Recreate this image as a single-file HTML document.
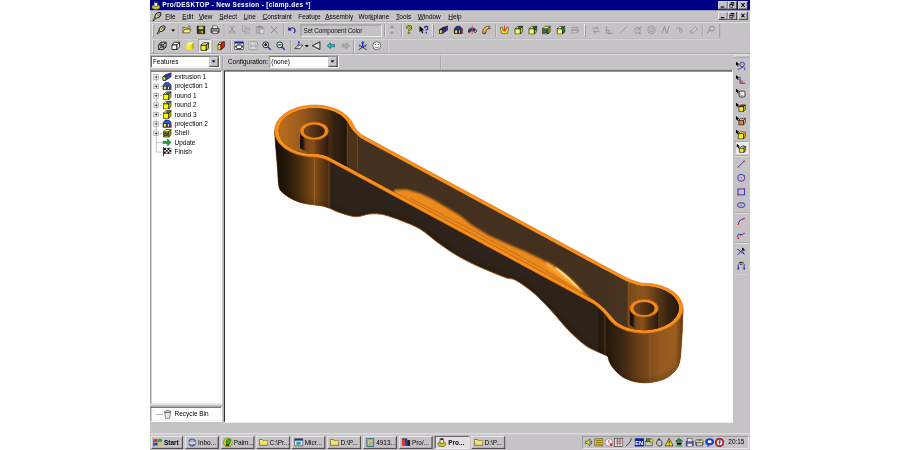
<!DOCTYPE html><html><head><meta charset="utf-8"><title>Pro/DESKTOP - New Session - [clamp.des *]</title><style>
html,body{margin:0;padding:0;background:#fff;}
body{width:900px;height:450px;overflow:hidden;position:relative;font-family:"Liberation Sans",sans-serif;}
#scr{position:absolute;left:150px;top:0;width:1024px;height:768px;transform:scale(0.5859375);transform-origin:0 0;background:#c6c3c6;font-size:11px;color:#000;overflow:hidden;}
#scr div,#scr span{position:absolute;box-sizing:border-box;white-space:nowrap;}
.tb{background:#000084;left:0;top:0;width:1024px;height:18px;}
.tt{color:#fff;font-weight:bold;left:21px;top:2px;letter-spacing:0.57px;}
.btn{background:#c6c3c6;border:1px solid;border-color:#fff #000 #000 #fff;box-shadow:inset -1px -1px 0 #848284;}
.mi{top:21px;height:14px;line-height:14px;}
.mi u{text-decoration:underline;}
.sepv{width:2px;border-left:1px solid #848284;border-right:1px solid #fff;}
.seph{height:2px;border-top:1px solid #848284;border-bottom:1px solid #fff;}
.grip{width:3px;border:1px solid;border-color:#fff #848284 #848284 #fff;}
.sunk{border:1px solid;border-color:#5c5c5c #fff #fff #5c5c5c;box-shadow:inset 1px 1px 0 #000, inset -1px -1px 0 #c6c3c6;background:#fff;}
.cbtn{background:#c6c3c6;border:1px solid;border-color:#c6c3c6 #000 #000 #c6c3c6;box-shadow:inset 1px 1px 0 #fff, inset -1px -1px 0 #848284;}
.ic{width:16px;height:16px;}
.task{top:744px;height:22px;line-height:20px;background:#c6c3c6;border:1px solid;border-color:#fff #000 #000 #fff;box-shadow:inset -1px -1px 0 #848284;}
.task span{left:22px;top:0;}
.task i{position:absolute;left:4px;top:2px;width:16px;height:16px;display:block;}
.tree{line-height:16px;height:16px;}
#model{position:absolute;left:0;top:0;}
</style></head><body>
<div id="scr">
<div class="tb"></div>
<svg style="position:absolute;left:2px;top:1px" width="16" height="16" viewBox="0 0 16 16"><ellipse cx="8" cy="11" rx="7" ry="4" fill="#d8c830" stroke="#404000"/><rect x="5" y="2" width="6" height="8" fill="#e8e8d0" stroke="#303030"/><rect x="6" y="1" width="4" height="3" fill="#202020"/></svg>
<span class="tt">Pro/DESKTOP - New Session - [clamp.des *]</span>
<div class="btn" style="left:970px;top:2px;width:16px;height:14px"></div>
<div style="left:974px;top:11px;width:6px;height:2px;background:#000"></div>
<div class="btn" style="left:986px;top:2px;width:16px;height:14px"></div>
<div style="left:991px;top:4px;width:6px;height:6px;border:1px solid #000;border-top-width:2px"></div>
<div style="left:989px;top:7px;width:6px;height:6px;border:1px solid #000;border-top-width:2px;background:#c6c3c6"></div>
<div class="btn" style="left:1004px;top:2px;width:16px;height:14px"></div>
<svg style="position:absolute;left:1008px;top:5px" width="8" height="7" viewBox="0 0 8 7"><path d="M0 0h2l2 2 2-2h2L5 3.5 8 7H6L4 5 2 7H0l3-3.5z" fill="#000"/></svg>
<div style="left:0;top:18px;width:1024px;height:1px;background:#e8e8e8"></div>
<svg style="position:absolute;left:4px;top:20px" width="16" height="16" viewBox="0 0 16 16"><ellipse cx="9.5" cy="6" rx="6" ry="3.6" transform="rotate(-42 9.5 6)" fill="#f0eca8" stroke="#1c1c10" stroke-width="1.8"/><ellipse cx="10.2" cy="5.4" rx="2.6" ry="1.3" transform="rotate(-42 10.2 5.4)" fill="#fff" stroke="#1c1c10" stroke-width="0.9"/><path d="M5 10.5L1.8 14.6" stroke="#1c1c10" stroke-width="3.2" stroke-linecap="round"/><path d="M5 10.5L2.2 14" stroke="#e8e4a0" stroke-width="1.2" stroke-linecap="round"/></svg>
<span class="mi" style="left:26px"><u>F</u>ile</span>
<span class="mi" style="left:55px"><u>E</u>dit</span>
<span class="mi" style="left:83px"><u>V</u>iew</span>
<span class="mi" style="left:118px"><u>S</u>elect</span>
<span class="mi" style="left:160px"><u>L</u>ine</span>
<span class="mi" style="left:192px"><u>C</u>onstraint</span>
<span class="mi" style="left:253px">Featu<u>r</u>e</span>
<span class="mi" style="left:299px"><u>A</u>ssembly</span>
<span class="mi" style="left:356px">Wor<u>k</u>plane</span>
<span class="mi" style="left:420px"><u>T</u>ools</span>
<span class="mi" style="left:457px"><u>W</u>indow</span>
<span class="mi" style="left:509px"><u>H</u>elp</span>
<div class="btn" style="left:970px;top:20px;width:16px;height:14px"></div>
<div style="left:974px;top:29px;width:6px;height:2px;background:#000"></div>
<div class="btn" style="left:986px;top:20px;width:16px;height:14px"></div>
<div style="left:991px;top:22px;width:6px;height:6px;border:1px solid #000;border-top-width:2px"></div>
<div style="left:989px;top:25px;width:6px;height:6px;border:1px solid #000;border-top-width:2px;background:#c6c3c6"></div>
<div class="btn" style="left:1004px;top:20px;width:16px;height:14px"></div>
<svg style="position:absolute;left:1008px;top:23px" width="8" height="7" viewBox="0 0 8 7"><path d="M0 0h2l2 2 2-2h2L5 3.5 8 7H6L4 5 2 7H0l3-3.5z" fill="#000"/></svg>
<div class="seph" style="left:0;top:37px;width:1024px"></div>
<div class="seph" style="left:0;top:65px;width:974px"></div>
<div class="seph" style="left:0;top:91px;width:1024px"></div>
<div class="grip" style="left:4px;top:41px;height:22px"></div>
<svg style="position:absolute;left:11px;top:43px" width="16" height="16" viewBox="0 0 16 16"><ellipse cx="9.5" cy="6" rx="6" ry="3.6" transform="rotate(-42 9.5 6)" fill="#f0eca8" stroke="#1c1c10" stroke-width="1.8"/><ellipse cx="10.2" cy="5.4" rx="2.6" ry="1.3" transform="rotate(-42 10.2 5.4)" fill="#fff" stroke="#1c1c10" stroke-width="0.9"/><path d="M5 10.5L1.8 14.6" stroke="#1c1c10" stroke-width="3.2" stroke-linecap="round"/><path d="M5 10.5L2.2 14" stroke="#e8e4a0" stroke-width="1.2" stroke-linecap="round"/></svg>
<svg style="position:absolute;left:36px;top:50px" width="7" height="4" viewBox="0 0 7 4"><path d="M0 0h7L3.5 4z" fill="#000"/></svg>
<div class="sepv" style="left:49px;top:41px;height:22px"></div>
<svg style="position:absolute;left:55px;top:43px" width="16" height="16" viewBox="0 0 16 16"><path d="M1 13V4h4l1 1h6v2" fill="#e8d860" stroke="#282800"/><path d="M1 13l3-6h11l-3 6z" fill="#f8f080" stroke="#282800"/><path d="M10 1q3 0 4 3" stroke="#000" fill="none"/></svg>
<svg style="position:absolute;left:79px;top:43px" width="16" height="16" viewBox="0 0 16 16"><path d="M1.5 1.5h13v13h-12l-1-1z" fill="#202010" stroke="#000"/><rect x="4" y="2" width="8" height="5" fill="#d8d060"/><rect x="4" y="9" width="8" height="5" fill="#606020"/><rect x="9" y="10" width="2" height="3" fill="#e8e8c0"/></svg>
<svg style="position:absolute;left:103px;top:43px" width="16" height="16" viewBox="0 0 16 16"><path d="M4 6V1h7l1 1v4" fill="#fff" stroke="#101010"/><path d="M1 6h14v6H1z" fill="#a4a4a4" stroke="#000" stroke-width="1.300"/><path d="M3 10h10v4H3z" fill="#e8e8e8" stroke="#000"/><rect x="11" y="7.5" width="2" height="1" fill="#e0e000"/></svg>
<div class="sepv" style="left:126px;top:41px;height:22px"></div>
<svg style="position:absolute;left:132px;top:43px" width="16" height="16" viewBox="0 0 16 16"><path d="M5 1l5 9M11 1L6 10" stroke="#848284" fill="none" stroke-width="1.2"/><circle cx="4.5" cy="12" r="2.2" fill="none" stroke="#848284"/><circle cx="11.5" cy="12" r="2.2" fill="none" stroke="#848284"/></svg>
<svg style="position:absolute;left:156px;top:43px" width="16" height="16" viewBox="0 0 16 16"><path d="M1.5 1.5h7v9h-7z" fill="none" stroke="#848284"/><path d="M6.5 5.5h7v9h-7z" fill="#d4d0d4" stroke="#848284"/><path d="M8 8h4M8 10h4M8 12h4" stroke="#848284" stroke-width="0.8"/></svg>
<svg style="position:absolute;left:180px;top:43px" width="16" height="16" viewBox="0 0 16 16"><path d="M1.5 2.5h11v11h-11z" fill="#b8b4b8" stroke="#848284"/><rect x="4" y="1" width="6" height="3" fill="#848284"/><path d="M7.5 6.5h7v8h-7z" fill="#dcdcdc" stroke="#848284"/></svg>
<svg style="position:absolute;left:204px;top:43px" width="16" height="16" viewBox="0 0 16 16"><path d="M2.5 2.5l11 11M13.5 2.5l-11 11" stroke="#848284" stroke-width="1.6"/></svg>
<div class="sepv" style="left:228px;top:41px;height:22px"></div>
<svg style="position:absolute;left:235px;top:43px" width="16" height="16" viewBox="0 0 16 16"><path d="M3 7q5-5 9 0q2 4-2 6" fill="none" stroke="#101090" stroke-width="1.8"/><path d="M1 3v6h6z" fill="#101090"/></svg>
<div style="left:257px;top:42px;width:139px;height:21px;background:#c6c3c6;border:1px solid;border-color:#848284 #fff #fff #848284;box-shadow:inset 1px 1px 0 #a8a6a8"></div>
<span style="left:262px;top:46px;color:#181818;letter-spacing:-0.3px">Set Component Color</span>
<div class="sepv" style="left:400px;top:41px;height:22px"></div>
<svg style="position:absolute;left:405px;top:43px" width="16" height="16" viewBox="0 0 16 16"><path d="M8 1v14M8 1l-3 4M8 1l3 4M8 15l-3-4M8 15l3-4" stroke="#848284" fill="none" stroke-width="1.2"/><path d="M5 8h6" stroke="#fff"/></svg>
<div class="sepv" style="left:429px;top:41px;height:22px"></div>
<svg style="position:absolute;left:434px;top:43px" width="16" height="16" viewBox="0 0 16 16"><path d="M4.5 5q0-3.5 3.5-3.5t3.5 3q0 2-2 3t-1.5 2.5" fill="none" stroke="#000" stroke-width="3.4"/><path d="M4.5 5q0-3.5 3.5-3.5t3.5 3q0 2-2 3t-1.5 2.5" fill="none" stroke="#e8e000" stroke-width="1.8"/><circle cx="8" cy="13.3" r="1.7" fill="#e8e000" stroke="#000" stroke-width="0.8"/></svg>
<svg style="position:absolute;left:459px;top:43px" width="16" height="16" viewBox="0 0 16 16"><path d="M1 1v11l2.5-2.5 2 4.5 2-1-2-4.3H9z" fill="#000"/><path d="M9.500 5q0-3 3-3t3 2.600q0 1.800-1.700 2.600t-1.300 2.300" fill="none" stroke="#1010a0" stroke-width="2"/><circle cx="12.500" cy="12.800" r="1.3" fill="#1010a0"/></svg>
<div class="grip" style="left:481px;top:41px;height:22px"></div>
<svg style="position:absolute;left:493px;top:43px" width="16" height="16" viewBox="0 0 16 16"><path d="M1 8l5-4 9-2v6l-9 6-5 0z" fill="#1838b0" stroke="#000"/><path d="M1 8h5v6H1z" fill="#f0e020" stroke="#000"/><path d="M6 8l9-6" stroke="#000" fill="none"/><path d="M14 0v9" stroke="#f02020" stroke-width="1.4"/></svg>
<svg style="position:absolute;left:518px;top:43px" width="16" height="16" viewBox="0 0 16 16"><path d="M1 7l4-5h6l4 4v8H1z" fill="#1838b0" stroke="#000"/><path d="M2 8h5v6H2z" fill="#f0e020" stroke="#000"/><path d="M9 8h3v6H9z" fill="#f0e020" stroke="#000"/><path d="M14.500 6v9" stroke="#f02020" stroke-width="1.6"/></svg>
<svg style="position:absolute;left:542px;top:43px" width="16" height="16" viewBox="0 0 16 16"><path d="M1 11q0-6 7-6t7 6q-2 3-4 0q0-2-3-2t-3 2q-2 3-4 0z" fill="#2040b8" stroke="#000"/><path d="M11 11q2 3 4 0q0-3-2-3.500z" fill="#f0e020" stroke="#000" stroke-width="0.8"/><path d="M8 0v16" stroke="#f03030" stroke-width="1.3"/></svg>
<svg style="position:absolute;left:566px;top:43px" width="16" height="16" viewBox="0 0 16 16"><path d="M2 14q-1-10 8-12h4v4h-3q-4 1-4 8z" fill="#f0a040" stroke="#000"/><path d="M2 14q1 2 5 0" fill="#2040b8" stroke="#1030a0"/><path d="M4 10q1-6 8-7" stroke="#f8e8a0" fill="none" stroke-width="1.5"/><ellipse cx="13" cy="4" rx="1.300" ry="2" fill="#f0d860" stroke="#000" stroke-width="0.7"/></svg>
<div class="sepv" style="left:589px;top:41px;height:22px"></div>
<svg style="position:absolute;left:597px;top:43px" width="16" height="16" viewBox="0 0 16 16"><path d="M1 4l3-1 2 7h4l2-7 3 1-2 10H3z" fill="#f8f020" stroke="#404000"/><path d="M8 0v9" stroke="#f02020" stroke-width="1.4"/><path d="M6 6l2 4 2-4z" fill="#f02020"/></svg>
<svg style="position:absolute;left:621px;top:43px" width="16" height="16" viewBox="0 0 16 16"><path d="M2 6h9v9H2z" fill="#ffff50" stroke="#000" stroke-width="1"/><path d="M2 6l4-4h9l-4 4z" fill="#ffffa0" stroke="#000" stroke-width="1"/><path d="M11 6l4-4v9l-4 4z" fill="#c8c820" stroke="#000" stroke-width="1"/><path d="M7 5q0-3 4-3l4 0-4 4z" fill="#108888" stroke="#000" stroke-width="0.8"/></svg>
<svg style="position:absolute;left:645px;top:43px" width="16" height="16" viewBox="0 0 16 16"><path d="M2 6h9v9H2z" fill="#ffff50" stroke="#000" stroke-width="1"/><path d="M2 6l4-4h9l-4 4z" fill="#ffffa0" stroke="#000" stroke-width="1"/><path d="M11 6l4-4v9l-4 4z" fill="#c8c820" stroke="#000" stroke-width="1"/><path d="M8 4l3-2h4l-4 4z" fill="#108888" stroke="#000" stroke-width="0.8"/><path d="M11 6l4-4v4l-4 4z" fill="#108888" stroke="#000" stroke-width="0.8"/></svg>
<svg style="position:absolute;left:668px;top:43px" width="16" height="16" viewBox="0 0 16 16"><path d="M2 6h9v9H2z" fill="#d8d020" stroke="#000" stroke-width="1"/><path d="M2 6l4-4h9l-4 4z" fill="#ffff60" stroke="#000" stroke-width="1"/><path d="M11 6l4-4v9l-4 4z" fill="#a0a000" stroke="#000" stroke-width="1"/><rect x="4" y="8" width="5" height="5" fill="#108080" stroke="#000" stroke-width="0.8"/></svg>
<svg style="position:absolute;left:693px;top:43px" width="16" height="16" viewBox="0 0 16 16"><path d="M2 6h9v9H2z" fill="#ffff50" stroke="#000" stroke-width="1"/><path d="M2 6l4-4h9l-4 4z" fill="#ffffa0" stroke="#000" stroke-width="1"/><path d="M11 6l4-4v9l-4 4z" fill="#c8c820" stroke="#000" stroke-width="1"/><path d="M9 3h3l3.500 8-4 2z" fill="#108888" stroke="#000" stroke-width="0.8"/></svg>
<svg style="position:absolute;left:717px;top:43px" width="16" height="16" viewBox="0 0 16 16"><path d="M3 4h9v3H3zM3 9h9v4H3z" fill="#d4d0d4" stroke="#848284"/><path d="M12 4l2-2M12 9l2-2v4l-2 2" stroke="#848284" fill="none"/></svg>
<div class="grip" style="left:741px;top:41px;height:22px"></div>
<svg style="position:absolute;left:753px;top:43px" width="16" height="16" viewBox="0 0 16 16"><path d="M2 5h9M9 3l3 2-3 2M14 11H5M7 9l-3 2 3 2" stroke="#848284" fill="none" stroke-width="1.2"/></svg>
<svg style="position:absolute;left:776px;top:43px" width="16" height="16" viewBox="0 0 16 16"><path d="M3 2v12h11M3 9h5v5" stroke="#848284" fill="none" stroke-width="1.3"/></svg>
<svg style="position:absolute;left:800px;top:43px" width="16" height="16" viewBox="0 0 16 16"><path d="M2 14L14 2" stroke="#848284" stroke-width="1.3"/></svg>
<svg style="position:absolute;left:825px;top:43px" width="16" height="16" viewBox="0 0 16 16"><circle cx="7" cy="9" r="5" fill="none" stroke="#848284" stroke-width="1.2"/><path d="M7 9l7-7M10 14l4 1" stroke="#848284" stroke-width="1.2"/></svg>
<svg style="position:absolute;left:848px;top:43px" width="16" height="16" viewBox="0 0 16 16"><circle cx="8" cy="8" r="6.500" fill="none" stroke="#848284" stroke-width="1.100"/><circle cx="8" cy="8" r="3.200" fill="none" stroke="#848284" stroke-width="1.100"/></svg>
<svg style="position:absolute;left:872px;top:43px" width="16" height="16" viewBox="0 0 16 16"><path d="M2 14L6 2M6 2l4 12M10 14l4-12" stroke="#848284" stroke-width="1.300" fill="none"/></svg>
<svg style="position:absolute;left:896px;top:43px" width="16" height="16" viewBox="0 0 16 16"><path d="M2 7q5-6 9 0M11 7q2 4-2 7M8 6v5" stroke="#848284" stroke-width="1.200" fill="none"/></svg>
<svg style="position:absolute;left:920px;top:43px" width="16" height="16" viewBox="0 0 16 16"><path d="M2 12l3 2 9-8-3-3z" fill="#dcdcdc" stroke="#848284" stroke-width="1.300"/><path d="M2 9l4 4" stroke="#848284"/></svg>
<div class="sepv" style="left:942px;top:41px;height:22px"></div>
<svg style="position:absolute;left:949px;top:43px" width="16" height="16" viewBox="0 0 16 16"><circle cx="10" cy="6" r="4.200" fill="none" stroke="#848284" stroke-width="1.300"/><path d="M7 9l-5 5" stroke="#848284" stroke-width="1.800"/><path d="M8 10l-5 5" stroke="#fff" stroke-width="0.800"/></svg>
<div style="left:972px;top:40px;width:1px;height:25px;background:#848284"></div>
<div class="grip" style="left:4px;top:68px;height:22px"></div>
<svg style="position:absolute;left:13px;top:70px" width="16" height="16" viewBox="0 0 16 16"><path d="M1.500 6.500h8v8h-8z" fill="#f4f4f4" stroke="#000" stroke-width="1.300"/><path d="M1.500 6.500l4.500-4.500h8.500v8l-4.500 4.500M9.500 6.500l5-4.500" fill="none" stroke="#000" stroke-width="1.300"/><path d="M6 2v8h8.500M6 10l-4.500 4.500" fill="none" stroke="#000" stroke-width="1"/><circle cx="6" cy="10" r="2.200" fill="none" stroke="#000" stroke-width="0.900"/></svg>
<svg style="position:absolute;left:36px;top:70px" width="16" height="16" viewBox="0 0 16 16"><path d="M1.500 6.500h8.500v8h-8.500z" fill="#fff" stroke="#000" stroke-width="1.300"/><path d="M1.500 6.500l4.500-4.500h8.500l-4.500 4.500z" fill="#fff" stroke="#000" stroke-width="1.300"/><path d="M10 6.500l4.500-4.500v8l-4.500 4.500z" fill="#fff" stroke="#000" stroke-width="1.300"/></svg>
<svg style="position:absolute;left:60px;top:70px" width="16" height="16" viewBox="0 0 16 16"><path d="M2 6h9v9H2z" fill="#f8f020" stroke="none" stroke-width="0"/><path d="M2 6l4-4h9l-4 4z" fill="#ffff90" stroke="none" stroke-width="0"/><path d="M11 6l4-4v9l-4 4z" fill="#b8b800" stroke="none" stroke-width="0"/></svg>
<div style="left:82px;top:67px;width:22px;height:22px;background:#e4e2e4;border:1px solid;border-color:#848284 #fff #fff #848284"></div>
<svg style="position:absolute;left:85px;top:71px" width="16" height="16" viewBox="0 0 16 16"><path d="M2 6h9v9H2z" fill="#f8f020" stroke="#000" stroke-width="1.2"/><path d="M2 6l4-4h9l-4 4z" fill="#ffff80" stroke="#000" stroke-width="1.2"/><path d="M11 6l4-4v9l-4 4z" fill="#c8c800" stroke="#000" stroke-width="1.2"/></svg>
<div class="sepv" style="left:107px;top:68px;height:22px"></div>
<svg style="position:absolute;left:113px;top:70px" width="16" height="16" viewBox="0 0 16 16"><path d="M3 6h5v9H3z" fill="#f8f020" stroke="#000"/><path d="M3 6l3-4h4l-2 4z" fill="#ffff80" stroke="#000"/><path d="M8 6l2-4 4-1v9l-6 5z" fill="#e01818" stroke="#000"/></svg>
<div class="sepv" style="left:137px;top:68px;height:22px"></div>
<svg style="position:absolute;left:144px;top:70px" width="16" height="16" viewBox="0 0 16 16"><rect x="0.500" y="1.500" width="15" height="13" fill="#fff" stroke="#000"/><rect x="0.500" y="1.500" width="15" height="3" fill="#1030a0"/><path d="M3 7l-2 2.500 2 2.500zM13 7l2 2.500-2 2.500zM5 6h6v1H5zM5 13h6v1H5z" fill="#000"/><rect x="4" y="7" width="8" height="6" fill="none" stroke="#000"/></svg>
<svg style="position:absolute;left:168px;top:70px" width="16" height="16" viewBox="0 0 16 16"><rect x="0.500" y="1.500" width="15" height="13" fill="#d8d8d8" stroke="#848284"/><path d="M3 5l4 3-4 3zM13 5l-4 3 4 3z" fill="none" stroke="#848284"/></svg>
<svg style="position:absolute;left:191px;top:70px" width="16" height="16" viewBox="0 0 16 16"><circle cx="6.500" cy="6.500" r="5" fill="#e8f8f8" stroke="#000" stroke-width="1.400"/><path d="M10 10l5 5" stroke="#1020a0" stroke-width="2.200"/><path d="M4 6.500h5" stroke="#000" stroke-width="1.300"/><path d="M6.500 4v5" stroke="#000" stroke-width="1.300"/><circle cx="6.500" cy="6.500" r="2.200" fill="#000"/></svg>
<svg style="position:absolute;left:215px;top:70px" width="16" height="16" viewBox="0 0 16 16"><circle cx="6.500" cy="6.500" r="5" fill="#e8f8f8" stroke="#000" stroke-width="1.400"/><path d="M10 10l5 5" stroke="#1020a0" stroke-width="2.200"/><path d="M4 6.500h5" stroke="#000" stroke-width="1.300"/><path d="M3.500 6.500h6" stroke="#108080" stroke-width="1.600"/></svg>
<div class="sepv" style="left:239px;top:68px;height:22px"></div>
<svg style="position:absolute;left:246px;top:70px" width="16" height="16" viewBox="0 0 16 16"><path d="M1 13l5-6h9l-5 6z" fill="#e8e8e8" stroke="#000"/><path d="M8 1v8" stroke="#2030c0" stroke-width="1.300"/><circle cx="8" cy="2" r="1.500" fill="#2030c0"/><path d="M3 14l4-5" stroke="#000" stroke-width="0.600"/></svg>
<svg style="position:absolute;left:264px;top:77px" width="7" height="4" viewBox="0 0 7 4"><path d="M0 0h7L3.5 4z" fill="#000"/></svg>
<svg style="position:absolute;left:276px;top:70px" width="16" height="16" viewBox="0 0 16 16"><path d="M1 8L14 1.500v13z" fill="#e0e0e0" stroke="#000" stroke-width="1.400"/></svg>
<svg style="position:absolute;left:301px;top:70px" width="16" height="16" viewBox="0 0 16 16"><path d="M1 8l6-5v3h7v4H7v3z" fill="#18c8c8" stroke="#204060" stroke-width="1"/></svg>
<svg style="position:absolute;left:326px;top:70px" width="16" height="16" viewBox="0 0 16 16"><path d="M15 8l-6-5v3H2v4h7v3z" fill="#b0b0b0" stroke="#848284" stroke-width="1"/></svg>
<div class="sepv" style="left:347px;top:68px;height:22px"></div>
<svg style="position:absolute;left:355px;top:70px" width="16" height="16" viewBox="0 0 16 16"><path d="M1 6l14 9M15 6L1 15" stroke="#202020" stroke-width="1.400"/><path d="M8 0l-3 4h1.800v6h2.400V4H11z" fill="#1030e0"/><circle cx="8" cy="10.500" r="1.800" fill="#1030e0"/><path d="M2 9l2 1M14 9l-2 1" stroke="#1030d0" stroke-width="1.300"/></svg>
<svg style="position:absolute;left:379px;top:70px" width="16" height="16" viewBox="0 0 16 16"><circle cx="8" cy="8" r="6.800" fill="#fff" stroke="#202020" stroke-width="1.100"/><circle cx="5.500" cy="6" r="0.900"/><circle cx="10.500" cy="6" r="0.900"/><path d="M4.500 10q3.500 3 7 0" fill="none" stroke="#000" stroke-width="0.900"/></svg>
<div style="left:406px;top:67px;width:1px;height:24px;background:#848284"></div><div style="left:407px;top:67px;width:1px;height:24px;background:#fff"></div>
<div class="sunk" style="left:1px;top:95px;width:118px;height:21px"></div>
<span style="left:5px;top:100px">Features</span>
<div class="cbtn" style="left:101px;top:97px;width:16px;height:17px"></div>
<svg style="position:absolute;left:105px;top:103px" width="7" height="4"><path d="M0 0h7L3.5 4z" fill="#000"/></svg>
<div class="sepv" style="left:123px;top:94px;height:26px"></div>
<span style="left:133px;top:100px">Configuration:</span>
<div class="sunk" style="left:203px;top:95px;width:119px;height:21px"></div>
<span style="left:207px;top:100px">(none)</span>
<div class="cbtn" style="left:304px;top:97px;width:16px;height:17px"></div>
<svg style="position:absolute;left:308px;top:103px" width="7" height="4"><path d="M0 0h7L3.5 4z" fill="#000"/></svg>
<div class="sepv" style="left:495px;top:94px;height:26px"></div>
<div class="sunk" style="left:0;top:120px;width:123px;height:570px"></div>
<div style="left:10px;top:131px;width:1px;height:96px;background:repeating-linear-gradient(#848284 0 1px,transparent 1px 2px)"></div>
<div style="left:10px;top:227px;width:1px;height:32px;background:#9c9c9c"></div>
<div style="left:11px;top:131px;width:9px;height:1px;background:repeating-linear-gradient(90deg,#848284 0 1px,transparent 1px 2px)"></div>
<div style="left:6px;top:127px;width:9px;height:9px;background:#fff;border:1px solid #848284"></div>
<div style="left:8px;top:131px;width:5px;height:1px;background:#000"></div><div style="left:10px;top:129px;width:1px;height:5px;background:#000"></div>
<svg style="position:absolute;left:21px;top:123px" width="16" height="16" viewBox="0 0 16 16"><path d="M1 8l5-4 9-2v6l-9 6-5 0z" fill="#2c50c8" stroke="#000"/><path d="M1 8h5v6H1z" fill="#f0e020" stroke="#000"/><path d="M6 8l9-6" stroke="#000" fill="none"/><path d="M15 0v7" stroke="#f02020" stroke-width="1.400"/></svg>
<span class="tree" style="left:42px;top:123px">extrusion 1</span>
<div style="left:11px;top:147px;width:9px;height:1px;background:repeating-linear-gradient(90deg,#848284 0 1px,transparent 1px 2px)"></div>
<div style="left:6px;top:143px;width:9px;height:9px;background:#fff;border:1px solid #848284"></div>
<div style="left:8px;top:147px;width:5px;height:1px;background:#000"></div><div style="left:10px;top:145px;width:1px;height:5px;background:#000"></div>
<svg style="position:absolute;left:21px;top:139px" width="16" height="16" viewBox="0 0 16 16"><path d="M1 7l4-5h6l4 4v8H1z" fill="#3458d0" stroke="#000"/><path d="M2 8h5v6H2z" fill="#f4ec60" stroke="#000"/><path d="M9 8h3v6H9z" fill="#f8f8f0" stroke="#000"/><path d="M15 7v9" stroke="#f02020" stroke-width="1.600"/></svg>
<span class="tree" style="left:42px;top:139px">projection 1</span>
<div style="left:11px;top:163px;width:9px;height:1px;background:repeating-linear-gradient(90deg,#848284 0 1px,transparent 1px 2px)"></div>
<div style="left:6px;top:159px;width:9px;height:9px;background:#fff;border:1px solid #848284"></div>
<div style="left:8px;top:163px;width:5px;height:1px;background:#000"></div><div style="left:10px;top:161px;width:1px;height:5px;background:#000"></div>
<svg style="position:absolute;left:21px;top:155px" width="16" height="16" viewBox="0 0 16 16"><path d="M2 6h9v9H2z" fill="#ffff00" stroke="#000" stroke-width="1"/><path d="M2 6l4-4h9l-4 4z" fill="#ffff80" stroke="#000" stroke-width="1"/><path d="M11 6l4-4v9l-4 4z" fill="#c0c000" stroke="#000" stroke-width="1"/><path d="M7 5q0-3 4-3l4 0-4 4z" fill="#3090d0" stroke="#000" stroke-width="0.800"/></svg>
<span class="tree" style="left:42px;top:155px">round 1</span>
<div style="left:11px;top:179px;width:9px;height:1px;background:repeating-linear-gradient(90deg,#848284 0 1px,transparent 1px 2px)"></div>
<div style="left:6px;top:175px;width:9px;height:9px;background:#fff;border:1px solid #848284"></div>
<div style="left:8px;top:179px;width:5px;height:1px;background:#000"></div><div style="left:10px;top:177px;width:1px;height:5px;background:#000"></div>
<svg style="position:absolute;left:21px;top:171px" width="16" height="16" viewBox="0 0 16 16"><path d="M2 6h9v9H2z" fill="#ffff00" stroke="#000" stroke-width="1"/><path d="M2 6l4-4h9l-4 4z" fill="#ffff80" stroke="#000" stroke-width="1"/><path d="M11 6l4-4v9l-4 4z" fill="#c0c000" stroke="#000" stroke-width="1"/><path d="M7 5q0-3 4-3l4 0-4 4z" fill="#3090d0" stroke="#000" stroke-width="0.800"/></svg>
<span class="tree" style="left:42px;top:171px">round 2</span>
<div style="left:11px;top:195px;width:9px;height:1px;background:repeating-linear-gradient(90deg,#848284 0 1px,transparent 1px 2px)"></div>
<div style="left:6px;top:191px;width:9px;height:9px;background:#fff;border:1px solid #848284"></div>
<div style="left:8px;top:195px;width:5px;height:1px;background:#000"></div><div style="left:10px;top:193px;width:1px;height:5px;background:#000"></div>
<svg style="position:absolute;left:21px;top:187px" width="16" height="16" viewBox="0 0 16 16"><path d="M2 6h9v9H2z" fill="#ffff00" stroke="#000" stroke-width="1"/><path d="M2 6l4-4h9l-4 4z" fill="#ffff80" stroke="#000" stroke-width="1"/><path d="M11 6l4-4v9l-4 4z" fill="#c0c000" stroke="#000" stroke-width="1"/><path d="M7 5q0-3 4-3l4 0-4 4z" fill="#3090d0" stroke="#000" stroke-width="0.800"/></svg>
<span class="tree" style="left:42px;top:187px">round 3</span>
<div style="left:11px;top:211px;width:9px;height:1px;background:repeating-linear-gradient(90deg,#848284 0 1px,transparent 1px 2px)"></div>
<div style="left:6px;top:207px;width:9px;height:9px;background:#fff;border:1px solid #848284"></div>
<div style="left:8px;top:211px;width:5px;height:1px;background:#000"></div><div style="left:10px;top:209px;width:1px;height:5px;background:#000"></div>
<svg style="position:absolute;left:21px;top:203px" width="16" height="16" viewBox="0 0 16 16"><path d="M1 7l4-5h6l4 4v8H1z" fill="#3458d0" stroke="#000"/><path d="M2 8h5v6H2z" fill="#f4ec60" stroke="#000"/><path d="M9 8h3v6H9z" fill="#f8f8f0" stroke="#000"/><path d="M15 7v9" stroke="#f02020" stroke-width="1.600"/></svg>
<span class="tree" style="left:42px;top:203px">projection 2</span>
<div style="left:11px;top:227px;width:9px;height:1px;background:repeating-linear-gradient(90deg,#848284 0 1px,transparent 1px 2px)"></div>
<div style="left:6px;top:223px;width:9px;height:9px;background:#fff;border:1px solid #848284"></div>
<div style="left:8px;top:227px;width:5px;height:1px;background:#000"></div><div style="left:10px;top:225px;width:1px;height:5px;background:#000"></div>
<svg style="position:absolute;left:21px;top:219px" width="16" height="16" viewBox="0 0 16 16"><path d="M2 6h9v9H2z" fill="#d8d020" stroke="#000" stroke-width="1"/><path d="M2 6l4-4h9l-4 4z" fill="#ffff60" stroke="#000" stroke-width="1"/><path d="M11 6l4-4v9l-4 4z" fill="#a0a000" stroke="#000" stroke-width="1"/><rect x="4" y="8" width="5" height="5" fill="#108080" stroke="#000" stroke-width="0.800"/></svg>
<span class="tree" style="left:42px;top:219px">Shell</span>
<div style="left:10px;top:243px;width:11px;height:1px;background:#9c9c9c"></div>
<svg style="position:absolute;left:21px;top:235px" width="16" height="16" viewBox="0 0 16 16"><path d="M1 6h8V2l6 6-6 6v-4H1z" fill="#20a040" stroke="#106020" stroke-width="0.800"/></svg>
<span class="tree" style="left:42px;top:235px">Update</span>
<div style="left:10px;top:259px;width:11px;height:1px;background:#9c9c9c"></div>
<svg style="position:absolute;left:21px;top:251px" width="16" height="16" viewBox="0 0 16 16"><path d="M2 0v16" stroke="#802020" stroke-width="1.800"/><path d="M3 2h12v9H3z" fill="#fff" stroke="#000" stroke-width="0.800"/><path d="M3 2h3v3H3zM9 2h3v3H9zM6 5h3v3H6zM12 5h3v3h-3zM3 8h3v3H3zM9 8h3v3H9z" fill="#000"/></svg>
<span class="tree" style="left:42px;top:251px">Finish</span>
<div class="sunk" style="left:0;top:694px;width:123px;height:26px"></div>
<div style="left:10px;top:707px;width:12px;height:1px;background:#848284"></div>
<svg style="position:absolute;left:22px;top:699px" width="16" height="16" viewBox="0 0 16 16"><path d="M3 5h10l-1.5 10h-7z" fill="#e8e8e8" stroke="#404040"/><path d="M2 4l5-3 7 2-1 2H3z" fill="#d0d0d0" stroke="#404040"/></svg>
<span style="left:42px;top:700px">Recycle Bin</span>
<div style="left:125px;top:119px;width:870px;height:602px;background:#fff;border:1px solid;border-color:#848284 #fff #fff #848284;box-shadow:inset 2px 2px 0 #303030"></div>
<div class="grip" style="left:997px;top:95px;width:24px;height:3px"></div>
<svg style="position:absolute;left:1000px;top:105px" width="17" height="17" viewBox="0 0 17 17"><path d="M0 0v7l1.800-1.600 1.500 3.200 1.400-.7-1.500-3H6z" fill="#000"/><circle cx="10.500" cy="5" r="4" fill="none" stroke="#2828b0" stroke-width="1.400"/><circle cx="10.500" cy="5" r="0.800" fill="#e02020"/><path d="M3 14l10-5M15 10v5" stroke="#2828b0" stroke-width="1.400"/></svg>
<svg style="position:absolute;left:1000px;top:128px" width="17" height="17" viewBox="0 0 17 17"><path d="M0 0v7l1.800-1.600 1.500 3.200 1.400-.7-1.500-3H6z" fill="#000"/><path d="M7 3v11h9" fill="none" stroke="#2828b0" stroke-width="1.500"/><path d="M7 10h4v4" fill="none" stroke="#e02020" stroke-width="1.200"/></svg>
<svg style="position:absolute;left:1000px;top:151px" width="17" height="17" viewBox="0 0 17 17"><path d="M0 0v7l1.800-1.600 1.500 3.200 1.400-.7-1.500-3H6z" fill="#000"/><rect x="5.500" y="4.500" width="10" height="10" rx="2" fill="#f0f0f0" stroke="#000" stroke-width="1.300"/><path d="M8 7v5h5" stroke="#808080" fill="none"/></svg>
<svg style="position:absolute;left:1000px;top:175px" width="17" height="17" viewBox="0 0 17 17"><path d="M0 0v7l1.800-1.600 1.500 3.200 1.400-.7-1.500-3H6z" fill="#000"/><path d="M5 7h8v8H5z" fill="#f8f020" stroke="#000"/><path d="M5 7l3-3h8l-3 3z" fill="#e82020" stroke="#000"/><path d="M13 7l3-3v8l-3 3z" fill="#c8c800" stroke="#000"/></svg>
<svg style="position:absolute;left:1000px;top:198px" width="17" height="17" viewBox="0 0 17 17"><path d="M0 0v7l1.800-1.600 1.500 3.200 1.400-.7-1.500-3H6z" fill="#000"/><path d="M5 7h8v8H5z" fill="#f08020" stroke="#000"/><path d="M5 7l3-3h8l-3 3z" fill="#e8e8e8" stroke="#000"/><path d="M13 7l3-3v8l-3 3z" fill="#c8c8c8" stroke="#000"/></svg>
<svg style="position:absolute;left:1000px;top:221px" width="17" height="17" viewBox="0 0 17 17"><path d="M0 0v7l1.800-1.600 1.500 3.200 1.400-.7-1.500-3H6z" fill="#000"/><path d="M4 7h9v9H4z" fill="#f8f020" stroke="#000"/><path d="M4 7l3-3h8l-2 3z" fill="#ffff80" stroke="#000"/><path d="M13 7l3-3v8l-3 4z" fill="#c8c800" stroke="#000"/><circle cx="13.500" cy="5.500" r="2.300" fill="#f08020"/></svg>
<div style="left:998px;top:241px;width:23px;height:22px;background:#eceaec;border:1px solid;border-color:#848284 #fff #fff #848284"></div>
<svg style="position:absolute;left:1001px;top:245px" width="17" height="17" viewBox="0 0 17 17"><path d="M0 0v7l1.800-1.600 1.500 3.200 1.400-.7-1.500-3H6z" fill="#000"/><path d="M5 8h8v7H5z" fill="#f8f020" stroke="#000"/><path d="M5 8l3-3h8l-3 3z" fill="#ffff80" stroke="#000"/><path d="M13 8l3-3v7l-3 3z" fill="#c8c800" stroke="#000"/><circle cx="12" cy="4.500" r="1.800" fill="#108080"/></svg>
<div class="seph" style="left:998px;top:265px;width:23px"></div>
<svg style="position:absolute;left:1001px;top:272px" width="16" height="16" viewBox="0 0 16 16"><path d="M3 13L13 3" stroke="#2828b0" stroke-width="1.500"/><circle cx="3" cy="13" r="1.300" fill="#e02020"/><circle cx="13" cy="3" r="1.300" fill="#e02020"/></svg>
<svg style="position:absolute;left:1001px;top:295px" width="16" height="16" viewBox="0 0 16 16"><circle cx="8" cy="8.500" r="6" fill="none" stroke="#2828b0" stroke-width="1.500"/><circle cx="8" cy="8.500" r="1.200" fill="#e02020"/><circle cx="13" cy="5" r="1.200" fill="#e02020"/></svg>
<svg style="position:absolute;left:1001px;top:319px" width="16" height="16" viewBox="0 0 16 16"><rect x="2.500" y="3.500" width="11" height="10" fill="none" stroke="#2828b0" stroke-width="1.500"/><circle cx="2.500" cy="13.500" r="1.300" fill="#e02020"/><circle cx="13.500" cy="3.500" r="1.300" fill="#e02020"/></svg>
<svg style="position:absolute;left:1001px;top:342px" width="16" height="16" viewBox="0 0 16 16"><ellipse cx="8" cy="8" rx="6.500" ry="4" fill="none" stroke="#2828b0" stroke-width="1.500"/><circle cx="8" cy="8" r="1.200" fill="#e02020"/><circle cx="12" cy="5" r="1.100" fill="#e02020"/></svg>
<div class="seph" style="left:998px;top:363px;width:23px"></div>
<svg style="position:absolute;left:1001px;top:370px" width="16" height="16" viewBox="0 0 16 16"><path d="M3 13Q4 5 13 3" fill="none" stroke="#2828b0" stroke-width="1.500"/><circle cx="3" cy="13" r="1.200" fill="#e02020"/><circle cx="13" cy="3" r="1.200" fill="#e02020"/><circle cx="6" cy="6" r="1.100" fill="#e02020"/></svg>
<svg style="position:absolute;left:1001px;top:394px" width="16" height="16" viewBox="0 0 16 16"><path d="M3 13Q0 4 6 6T13 4" fill="none" stroke="#2828b0" stroke-width="1.500"/><circle cx="3" cy="13" r="1.200" fill="#e02020"/><circle cx="13" cy="4" r="1.200" fill="#e02020"/><circle cx="7" cy="8" r="1.100" fill="#e02020"/></svg>
<div class="seph" style="left:998px;top:414px;width:23px"></div>
<svg style="position:absolute;left:1001px;top:421px" width="16" height="16" viewBox="0 0 16 16"><path d="M1 4l13 9M2 14L12 3" stroke="#2828b0" stroke-width="1.600"/><path d="M9 1l6 5-5 1z" fill="#000"/><path d="M10 9l3 3" stroke="#000" stroke-width="1.400"/></svg>
<svg style="position:absolute;left:1001px;top:446px" width="16" height="16" viewBox="0 0 16 16"><path d="M3 5v9M13 5v9" stroke="#2828b0" stroke-width="1.500"/><path d="M1 11l2 4 2-4zM11 11l2 4 2-4z" fill="#2828b0"/><path d="M4 3q4-3 8 0" stroke="#000" stroke-width="1.600" fill="none"/><path d="M6 5h4" stroke="#000" stroke-width="1.500"/></svg>
<div class="seph" style="left:998px;top:466px;width:23px"></div>
<div style="left:0;top:740px;width:1024px;height:1px;background:#fff"></div>
<div class="task" style="left:2px;width:54px;font-weight:bold"><svg width="16" height="16" viewBox="0 0 16 16" style="position:absolute;left:3px;top:2px"><path d="M1 3q3-2 6 0v5q-3-2-6 0z" fill="#e03020"/><path d="M8 3q3-2 6 0v5q-3-2-6 0z" fill="#20a030"/><path d="M1 9q3-2 6 0v5q-3-2-6 0z" fill="#2040d0"/><path d="M8 9q3-2 6 0v5q-3-2-6 0z" fill="#e8d020"/><path d="M0 2v13" stroke="#000" stroke-width="1.500"/></svg><span style="left:21px">Start</span></div>
<div class="task" style="left:60px;width:57px"><svg width="16" height="16" viewBox="0 0 16 16" style="position:absolute;left:3px;top:2px"><path d="M2 6q6-8 12 0" fill="none" stroke="#2060e0" stroke-width="2.500"/><path d="M14 10q-6 8-12 0" fill="none" stroke="#2060e0" stroke-width="2.500"/><rect x="3" y="6" width="10" height="5" fill="#fff" stroke="#806040"/><path d="M3 6l5 3 5-3" stroke="#e08020" fill="none"/></svg><span style="left:21px">Inbo...</span></div>
<div class="task" style="left:121px;width:57px"><svg width="16" height="16" viewBox="0 0 16 16" style="position:absolute;left:3px;top:2px"><circle cx="8" cy="8" r="7.500" fill="#e8e020" stroke="#404000"/><path d="M5 12V5l4-3 3 2-1 7z" fill="#20c040" stroke="#003000"/><rect x="5" y="11" width="5" height="3" fill="#303030"/></svg><span style="left:21px">Palm...</span></div>
<div class="task" style="left:182px;width:57px"><svg width="16" height="16" viewBox="0 0 16 16" style="position:absolute;left:3px;top:2px"><path d="M1 13V3h5l1 2h8v8z" fill="#f0e070" stroke="#504000"/><path d="M1 6h14" stroke="#fff8c0"/></svg><span style="left:21px">C:\Pr...</span></div>
<div class="task" style="left:242px;width:57px"><svg width="16" height="16" viewBox="0 0 16 16" style="position:absolute;left:3px;top:2px"><rect x="1" y="2" width="14" height="12" fill="#e8e8e8" stroke="#202020"/><rect x="1" y="2" width="14" height="3" fill="#1030a0"/><rect x="4" y="7" width="7" height="5" fill="#20a0a0"/></svg><span style="left:21px">Micr...</span></div>
<div class="task" style="left:303px;width:57px"><svg width="16" height="16" viewBox="0 0 16 16" style="position:absolute;left:3px;top:2px"><path d="M1 13V3h5l1 2h8v8z" fill="#f0e070" stroke="#504000"/><path d="M1 6h14" stroke="#fff8c0"/></svg><span style="left:21px">D:\P...</span></div>
<div class="task" style="left:364px;width:57px"><svg width="16" height="16" viewBox="0 0 16 16" style="position:absolute;left:3px;top:2px"><rect x="2" y="1" width="12" height="14" fill="#60c8e8" stroke="#204060"/><rect x="4" y="4" width="8" height="8" fill="#f8f8c0" stroke="#806000" stroke-width="0.600"/><path d="M5 6h6M5 8h6M5 10h6" stroke="#404040" stroke-width="0.700"/></svg><span style="left:21px">4913...</span></div>
<div class="task" style="left:425px;width:57px"><svg width="16" height="16" viewBox="0 0 16 16" style="position:absolute;left:3px;top:2px"><rect x="1" y="2" width="5" height="12" fill="#e03030"/><rect x="6" y="2" width="4" height="12" fill="#2040c0"/><rect x="10" y="4" width="5" height="10" fill="#202020"/><path d="M1 2h9" stroke="#000"/></svg><span style="left:21px">Pro/...</span></div>
<div class="task" style="left:486px;width:59px;font-weight:bold;border-color:#000 #fff #fff #000;box-shadow:inset 1px 1px 0 #848284;background:#e2e0e2"><svg width="16" height="16" viewBox="0 0 16 16" style="position:absolute;left:3px;top:2px"><ellipse cx="8" cy="11" rx="7" ry="4" fill="#d8c830" stroke="#404000"/><rect x="5" y="2" width="6" height="8" fill="#e8e8d0" stroke="#303030"/><rect x="6" y="1" width="4" height="3" fill="#202020"/></svg><span style="left:22px;top:1px">Pro...</span></div>
<div class="task" style="left:549px;width:57px"><svg width="16" height="16" viewBox="0 0 16 16" style="position:absolute;left:3px;top:2px"><path d="M1 13V3h5l1 2h8v8z" fill="#f0e070" stroke="#504000"/><path d="M1 6h14" stroke="#fff8c0"/></svg><span style="left:21px">D:\P...</span></div>
<div style="left:738px;top:744px;width:284px;height:22px;border:1px solid;border-color:#848284 #fff #fff #848284"></div>
<svg style="position:absolute;left:740.5px;top:747px" width="16" height="16" viewBox="0 0 16 16"><path d="M2 6h3l5-4v12l-5-4H2z" fill="#e8d820" stroke="#000" stroke-width="0.800"/><path d="M12 5q2 3 0 6" stroke="#000" fill="none"/></svg>
<svg style="position:absolute;left:757.7px;top:747px" width="16" height="16" viewBox="0 0 16 16"><rect x="1" y="2" width="14" height="12" fill="#f0d020" stroke="#403000"/><path d="M3 5h10M3 8h10M3 11h10" stroke="#403000"/></svg>
<svg style="position:absolute;left:774.9000000000001px;top:747px" width="16" height="16" viewBox="0 0 16 16"><circle cx="8" cy="8" r="6.500" fill="#f4f4f4" stroke="#606060"/><path d="M8 4v4l3 2" stroke="#d02020" fill="none" stroke-width="1.300"/><circle cx="12" cy="12" r="2.500" fill="#e03030"/></svg>
<svg style="position:absolute;left:792.1000000000001px;top:747px" width="16" height="16" viewBox="0 0 16 16"><rect x="1" y="1" width="14" height="14" fill="#e8e8e8" stroke="#202020"/><path d="M3 4h10M3 7h10M3 10h10M6 2v12M10 2v12" stroke="#c02020"/></svg>
<svg style="position:absolute;left:809.3000000000002px;top:747px" width="16" height="16" viewBox="0 0 16 16"><path d="M12 1q-1 9-9 13" stroke="#404040" stroke-width="1.600" fill="none"/><path d="M12 1l2 1-1 4z" fill="#808080"/></svg>
<svg style="position:absolute;left:826.5000000000002px;top:747px" width="16" height="16" viewBox="0 0 16 16"><rect x="0" y="1" width="16" height="14" fill="#1020a0"/><text x="8" y="12" font-size="10" font-weight="bold" fill="#fff" text-anchor="middle" font-family="Liberation Sans,sans-serif">EN</text></svg>
<svg style="position:absolute;left:843.7000000000003px;top:747px" width="16" height="16" viewBox="0 0 16 16"><rect x="1" y="6" width="12" height="8" fill="#c8c8c8" stroke="#303030"/><rect x="3" y="2" width="8" height="5" fill="#40a040" stroke="#203020"/><circle cx="12" cy="5" r="3" fill="#e8e020" stroke="#403000" stroke-width="0.700"/></svg>
<svg style="position:absolute;left:860.9000000000003px;top:747px" width="16" height="16" viewBox="0 0 16 16"><path d="M4 12q-3-6 4-9M8 3q7 2 4 10q-4 3-7 0" fill="none" stroke="#303030" stroke-width="1.500"/><path d="M8 0l-3 3 4 2z" fill="#303030"/></svg>
<svg style="position:absolute;left:878.1000000000004px;top:747px" width="16" height="16" viewBox="0 0 16 16"><path d="M8 1l7 13H1z" fill="#f8e020" stroke="#000"/><path d="M8 5v5M8 11.500v1.500" stroke="#000" stroke-width="1.500"/></svg>
<svg style="position:absolute;left:895.3000000000004px;top:747px" width="16" height="16" viewBox="0 0 16 16"><path d="M8 1l6 5H2z" fill="#20a040" stroke="#004010"/><path d="M3 8h10l-2 4H5z" fill="#000"/><rect x="2" y="13" width="12" height="2" fill="#20a040"/></svg>
<svg style="position:absolute;left:912.5000000000005px;top:747px" width="16" height="16" viewBox="0 0 16 16"><rect x="2" y="6" width="12" height="8" fill="#6060c8" stroke="#202060"/><rect x="4" y="1" width="8" height="6" fill="#f0f0f0" stroke="#404040"/><rect x="4" y="10" width="8" height="5" fill="#e8e8f8" stroke="#404040" stroke-width="0.600"/></svg>
<svg style="position:absolute;left:929.7000000000005px;top:747px" width="16" height="16" viewBox="0 0 16 16"><path d="M1 6q0-3 4-3h5q4 0 4 3v6H1z" fill="#e8e0b0" stroke="#403000"/><rect x="3" y="8" width="10" height="6" fill="#c8c8c8" stroke="#303030"/><path d="M4 5h7" stroke="#403000"/></svg>
<svg style="position:absolute;left:946.9000000000005px;top:747px" width="16" height="16" viewBox="0 0 16 16"><ellipse cx="8" cy="7" rx="7.500" ry="6" fill="#1840d0"/><path d="M5 12l-1 4 5-3z" fill="#1840d0"/><ellipse cx="8" cy="7" rx="3.500" ry="2.500" fill="#fff"/></svg>
<svg style="position:absolute;left:964.1000000000006px;top:747px" width="16" height="16" viewBox="0 0 16 16"><circle cx="8" cy="8" r="7" fill="#e02020" stroke="#600000"/><circle cx="8" cy="8" r="4.500" fill="#fff"/><path d="M8 3q4 2 0 10q-3-5 0-10" fill="#2040c0"/></svg>
<span style="left:987px;top:748px">20:15</span>
</div>
<svg id="model" width="900" height="450" viewBox="0 0 900 450">
<defs>
<linearGradient id="gL" gradientUnits="userSpaceOnUse" x1="277" y1="0" x2="330" y2="0"><stop offset="0" stop-color="#1a1209"/><stop offset="0.2" stop-color="#281a0c"/><stop offset="0.45" stop-color="#4c2e0f"/><stop offset="0.62" stop-color="#704315"/><stop offset="0.71" stop-color="#824d18"/><stop offset="0.8" stop-color="#704114"/><stop offset="0.9" stop-color="#583411"/><stop offset="1" stop-color="#40280f"/></linearGradient>
<linearGradient id="gR" gradientUnits="userSpaceOnUse" x1="604" y1="0" x2="684" y2="0"><stop offset="0" stop-color="#22170d"/><stop offset="0.2" stop-color="#3a2411"/><stop offset="0.45" stop-color="#6a4018"/><stop offset="0.7" stop-color="#94591f"/><stop offset="0.9" stop-color="#9a5e20"/><stop offset="1" stop-color="#6a3f14"/></linearGradient>
<linearGradient id="gI1" gradientUnits="userSpaceOnUse" x1="276" y1="0" x2="348" y2="0"><stop offset="0" stop-color="#bd6f1e"/><stop offset="0.3" stop-color="#a05f1d"/><stop offset="0.5" stop-color="#7e4b1a"/><stop offset="0.66" stop-color="#5c3714"/><stop offset="0.82" stop-color="#30200f"/><stop offset="1" stop-color="#22170c"/></linearGradient>
<linearGradient id="gI2" gradientUnits="userSpaceOnUse" x1="606" y1="0" x2="684" y2="0"><stop offset="0" stop-color="#43301e"/><stop offset="0.28" stop-color="#49341f"/><stop offset="0.283" stop-color="#7a4a1c"/><stop offset="0.41" stop-color="#84501d"/><stop offset="0.5" stop-color="#8a5520"/><stop offset="0.65" stop-color="#5e3915"/><stop offset="0.8" stop-color="#38230f"/><stop offset="1" stop-color="#1e140b"/></linearGradient>
<linearGradient id="gP" gradientUnits="objectBoundingBox" x1="0" y1="0" x2="1" y2="0"><stop offset="0" stop-color="#1a1008"/><stop offset="0.1" stop-color="#1e1309"/><stop offset="0.2" stop-color="#774617"/><stop offset="0.45" stop-color="#8a5119"/><stop offset="0.66" stop-color="#5a3513"/><stop offset="1" stop-color="#2a1a0c"/></linearGradient>
<linearGradient id="gH" gradientUnits="objectBoundingBox" x1="0" y1="0" x2="1" y2="0"><stop offset="0" stop-color="#7a4818"/><stop offset="1" stop-color="#2e1d0e"/></linearGradient>
<linearGradient id="gG" gradientUnits="userSpaceOnUse" x1="0" y1="-9" x2="0" y2="3"><stop offset="0" stop-color="#f08a1c" stop-opacity="0"/><stop offset="0.35" stop-color="#e88418" stop-opacity="0.9"/><stop offset="1" stop-color="#ff981e"/></linearGradient>
<clipPath id="cSil"><path d="M274.5 131.0 C274.8 134.2 275.5 144.0 276.0 150.0 C276.5 156.0 276.9 161.0 277.4 167.0 C277.9 173.0 278.0 181.7 278.9 186.0 C279.8 190.3 280.5 190.6 282.8 192.8 C285.1 195.0 289.3 197.7 292.8 199.4 C296.3 201.2 300.2 202.4 303.9 203.3 C307.6 204.2 311.9 204.5 315.0 205.0 C318.1 205.5 320.4 205.5 322.8 206.1 C325.2 206.7 326.5 207.2 329.4 208.3 C332.3 209.4 335.6 211.4 340.0 212.8 C344.4 214.2 351.0 216.5 356.0 216.7 C361.0 216.9 365.3 214.3 370.0 214.0 C374.7 213.7 379.1 213.7 384.4 214.9 C389.7 216.1 396.1 218.7 402.0 221.0 C407.9 223.3 414.4 225.7 420.0 229.0 C425.6 232.3 430.1 236.8 435.6 240.9 C441.2 245.0 447.4 249.6 453.3 253.3 C459.2 257.0 465.1 260.1 471.0 263.0 C476.9 265.9 483.1 268.5 489.0 271.0 C494.9 273.5 502.3 276.5 506.7 278.0 C511.1 279.5 511.2 277.8 515.6 280.2 C520.0 282.6 527.4 287.7 533.3 292.7 C539.2 297.7 545.2 304.2 551.0 310.4 C556.8 316.5 562.0 323.7 567.8 329.6 C573.6 335.5 580.0 341.6 585.6 345.6 C591.2 349.6 598.0 351.8 601.6 353.6 C605.2 355.4 606.2 355.1 607.5 356.5 C608.8 357.9 608.4 359.9 609.5 362.0 C610.6 364.1 611.9 366.6 614.0 369.0 C616.1 371.4 619.0 374.5 622.0 376.5 C625.0 378.5 628.3 379.9 632.0 381.0 C635.7 382.1 640.4 382.7 644.4 382.8 C648.4 382.9 652.3 382.3 656.0 381.5 C659.7 380.7 663.7 379.4 666.7 377.8 C669.7 376.2 672.0 374.1 674.0 372.0 C676.0 369.9 677.5 367.8 678.5 365.5 C679.5 363.2 679.9 360.6 680.3 358.0 C680.7 355.4 680.7 354.7 681.0 350.0 C681.3 345.3 682.0 337.0 682.3 330.0 C682.6 323.0 682.9 311.7 683.0 308.0 L660 312 L600 306 L330 158 L300 140 Z"/></clipPath>
<clipPath id="cCav"><path d="M278.6 131.0 A35.9 23.0 0 0 1 349.3 125.4 Q353.6 132.8 361.0 138.2 L620.0 278.1 Q631.0 284.5 642.2 286.2 A34.9 22.0 0 1 1 611.7 316.5 Q604.5 307.5 594.0 300.2 L331.0 158.2 Q322.0 153.0 310.1 153.9 A35.9 23.0 0 0 1 278.6 131.0 Z"/></clipPath>
<filter id="bl" x="-10%" y="-50%" width="120%" height="200%"><feGaussianBlur stdDeviation="1.1"/></filter>
<filter id="bl2" x="-10%" y="-10%" width="120%" height="120%"><feGaussianBlur stdDeviation="2"/></filter>
<filter id="bl3" x="-10%" y="-10%" width="120%" height="120%"><feGaussianBlur stdDeviation="0.5"/></filter>
</defs>
<path d="M274.5 131.0 C274.8 134.2 275.5 144.0 276.0 150.0 C276.5 156.0 276.9 161.0 277.4 167.0 C277.9 173.0 278.0 181.7 278.9 186.0 C279.8 190.3 280.5 190.6 282.8 192.8 C285.1 195.0 289.3 197.7 292.8 199.4 C296.3 201.2 300.2 202.4 303.9 203.3 C307.6 204.2 311.9 204.5 315.0 205.0 C318.1 205.5 320.4 205.5 322.8 206.1 C325.2 206.7 326.5 207.2 329.4 208.3 C332.3 209.4 335.6 211.4 340.0 212.8 C344.4 214.2 351.0 216.5 356.0 216.7 C361.0 216.9 365.3 214.3 370.0 214.0 C374.7 213.7 379.1 213.7 384.4 214.9 C389.7 216.1 396.1 218.7 402.0 221.0 C407.9 223.3 414.4 225.7 420.0 229.0 C425.6 232.3 430.1 236.8 435.6 240.9 C441.2 245.0 447.4 249.6 453.3 253.3 C459.2 257.0 465.1 260.1 471.0 263.0 C476.9 265.9 483.1 268.5 489.0 271.0 C494.9 273.5 502.3 276.5 506.7 278.0 C511.1 279.5 511.2 277.8 515.6 280.2 C520.0 282.6 527.4 287.7 533.3 292.7 C539.2 297.7 545.2 304.2 551.0 310.4 C556.8 316.5 562.0 323.7 567.8 329.6 C573.6 335.5 580.0 341.6 585.6 345.6 C591.2 349.6 598.0 351.8 601.6 353.6 C605.2 355.4 606.2 355.1 607.5 356.5 C608.8 357.9 608.4 359.9 609.5 362.0 C610.6 364.1 611.9 366.6 614.0 369.0 C616.1 371.4 619.0 374.5 622.0 376.5 C625.0 378.5 628.3 379.9 632.0 381.0 C635.7 382.1 640.4 382.7 644.4 382.8 C648.4 382.9 652.3 382.3 656.0 381.5 C659.7 380.7 663.7 379.4 666.7 377.8 C669.7 376.2 672.0 374.1 674.0 372.0 C676.0 369.9 677.5 367.8 678.5 365.5 C679.5 363.2 679.9 360.6 680.3 358.0 C680.7 355.4 680.7 354.7 681.0 350.0 C681.3 345.3 682.0 337.0 682.3 330.0 C682.6 323.0 682.9 311.7 683.0 308.0 L660 312 L600 306 L330 158 L300 140 Z" fill="#2d231a" stroke="#a85c12" stroke-width="0.9"/>
<g clip-path="url(#cSil)">
<rect x="270" y="120" width="58.5" height="100" fill="url(#gL)"/>
<rect x="328.5" y="150" width="1" height="60" fill="#a86018" opacity="0.7"/>
<rect x="605" y="300" width="80" height="90" fill="url(#gR)"/>
<rect x="598" y="300" width="7" height="60" fill="#241a10"/>
<rect x="604.6" y="300" width="0.8" height="60" fill="#8a4a10" opacity="0.8"/>
<rect x="649.5" y="330" width="0.8" height="55" fill="#b06a20" opacity="0.6"/>
<path d="M274.5 131.0 C274.8 134.2 275.5 144.0 276.0 150.0 C276.5 156.0 276.9 161.0 277.4 167.0 C277.9 173.0 278.0 181.7 278.9 186.0 C279.8 190.3 280.5 190.6 282.8 192.8 C285.1 195.0 289.3 197.7 292.8 199.4 C296.3 201.2 300.2 202.4 303.9 203.3 C307.6 204.2 311.9 204.5 315.0 205.0 C318.1 205.5 320.4 205.5 322.8 206.1 C325.2 206.7 326.5 207.2 329.4 208.3 C332.3 209.4 335.6 211.4 340.0 212.8 C344.4 214.2 351.0 216.5 356.0 216.7 C361.0 216.9 365.3 214.3 370.0 214.0 C374.7 213.7 379.1 213.7 384.4 214.9 C389.7 216.1 396.1 218.7 402.0 221.0 C407.9 223.3 414.4 225.7 420.0 229.0 C425.6 232.3 430.1 236.8 435.6 240.9 C441.2 245.0 447.4 249.6 453.3 253.3 C459.2 257.0 465.1 260.1 471.0 263.0 C476.9 265.9 483.1 268.5 489.0 271.0 C494.9 273.5 502.3 276.5 506.7 278.0 C511.1 279.5 511.2 277.8 515.6 280.2 C520.0 282.6 527.4 287.7 533.3 292.7 C539.2 297.7 545.2 304.2 551.0 310.4 C556.8 316.5 562.0 323.7 567.8 329.6 C573.6 335.5 580.0 341.6 585.6 345.6 C591.2 349.6 598.0 351.8 601.6 353.6 C605.2 355.4 606.2 355.1 607.5 356.5 C608.8 357.9 608.4 359.9 609.5 362.0 C610.6 364.1 611.9 366.6 614.0 369.0 C616.1 371.4 619.0 374.5 622.0 376.5 C625.0 378.5 628.3 379.9 632.0 381.0 C635.7 382.1 640.4 382.7 644.4 382.8 C648.4 382.9 652.3 382.3 656.0 381.5 C659.7 380.7 663.7 379.4 666.7 377.8 C669.7 376.2 672.0 374.1 674.0 372.0 C676.0 369.9 677.5 367.8 678.5 365.5 C679.5 363.2 679.9 360.6 680.3 358.0 C680.7 355.4 680.7 354.7 681.0 350.0 C681.3 345.3 682.0 337.0 682.3 330.0 C682.6 323.0 682.9 311.7 683.0 308.0" fill="none" stroke="#140c05" stroke-width="7" opacity="0.15" filter="url(#bl2)"/>
<rect x="314" y="150" width="0.8" height="58" fill="#c07020" opacity="0.6"/>
</g>
<path d="M274.5 131.0 A40.0 26.0 0 0 1 353.3 124.7 Q355.5 129.5 361.0 134.5 L620.0 274.4 Q631.0 280.8 642.0 283.2 A39.0 25.0 0 1 1 607.8 317.6 Q603.0 310.5 594.0 303.9 L331.0 161.9 Q322.0 156.7 309.6 156.8 A40.0 26.0 0 0 1 274.5 131.0 Z" fill="#fa8f1a" stroke="#c86c10" stroke-width="0.6"/>
<path d="M278.6 131.0 A35.9 23.0 0 0 1 349.3 125.4 Q353.6 132.8 361.0 138.2 L620.0 278.1 Q631.0 284.5 642.2 286.2 A34.9 22.0 0 1 1 611.7 316.5 Q604.5 307.5 594.0 300.2 L331.0 158.2 Q322.0 153.0 310.1 153.9 A35.9 23.0 0 0 1 278.6 131.0 Z" fill="#43301e"/>
<g clip-path="url(#cCav)">
<rect x="270" y="100" width="77.5" height="66" fill="url(#gI1)"/>
<rect x="606" y="270" width="80" height="68" fill="url(#gI2)"/>
<path d="M628 270V330M638 270V330" stroke="#a86420" stroke-width="0.6" opacity="0.7"/>
<path d="M347 100 L358 100 L358 170 L347 164 Z" fill="#4e3319"/>
<path d="M347.3 100 L347.3 165" stroke="#9a5a18" stroke-width="0.7" opacity="0.7"/>
<path d="M357.6 100 L357.6 170" stroke="#9a5a18" stroke-width="0.7" opacity="0.7"/>
<path d="M394.0 189.8 L406.7 189.6 L420.0 193.3 L433.3 199.6 L446.7 207.6 L460.0 215.6 L471.1 224.5 L488.9 235.5 L506.7 243.5 L524.4 251.0 L542.2 259.5 L560.0 270.5 L575.0 283.0 L588.0 296.0 L594.0 303.0 L594.0 300.9 L394.0 192.9 Z" fill="#ee8a1b" filter="url(#bl)"/>
<path d="M410 198.1 L470 228.9 L540 267.2 L585 294.1" stroke="#a85a10" stroke-width="0.7" fill="none" opacity="0.8"/>
<path d="M546 261 Q568 273 584 294 Q566 281 546 266 Z" fill="#ffb040" opacity="0.8" filter="url(#bl)"/>
<path d="M556 267 Q572 278 583 293 Q570 281 556 269 Z" fill="#ffe090" opacity="0.9" filter="url(#bl3)"/>
</g>
<path d="M300.0 130.9 L300.0 148.0 Q314.2 158.0 328.4 161.0 L328.4 130.9 Z" fill="url(#gP)" clip-path="url(#cCav)"/>
<ellipse cx="314.2" cy="130.9" rx="14.2" ry="8.9" fill="#f4881a" stroke="#b8620e" stroke-width="0.6"/>
<ellipse cx="314.2" cy="131.20000000000002" rx="10.6" ry="6.6" fill="url(#gH)"/>
<path d="M629.8 308.2 L629.8 325.0 Q644.0 335.0 658.2 338.0 L658.2 308.2 Z" fill="url(#gP)" clip-path="url(#cCav)"/>
<ellipse cx="644" cy="308.2" rx="14.2" ry="8.9" fill="#f4881a" stroke="#b8620e" stroke-width="0.6"/>
<ellipse cx="644" cy="308.5" rx="10.6" ry="6.6" fill="url(#gH)"/>
</svg>
</body></html>
